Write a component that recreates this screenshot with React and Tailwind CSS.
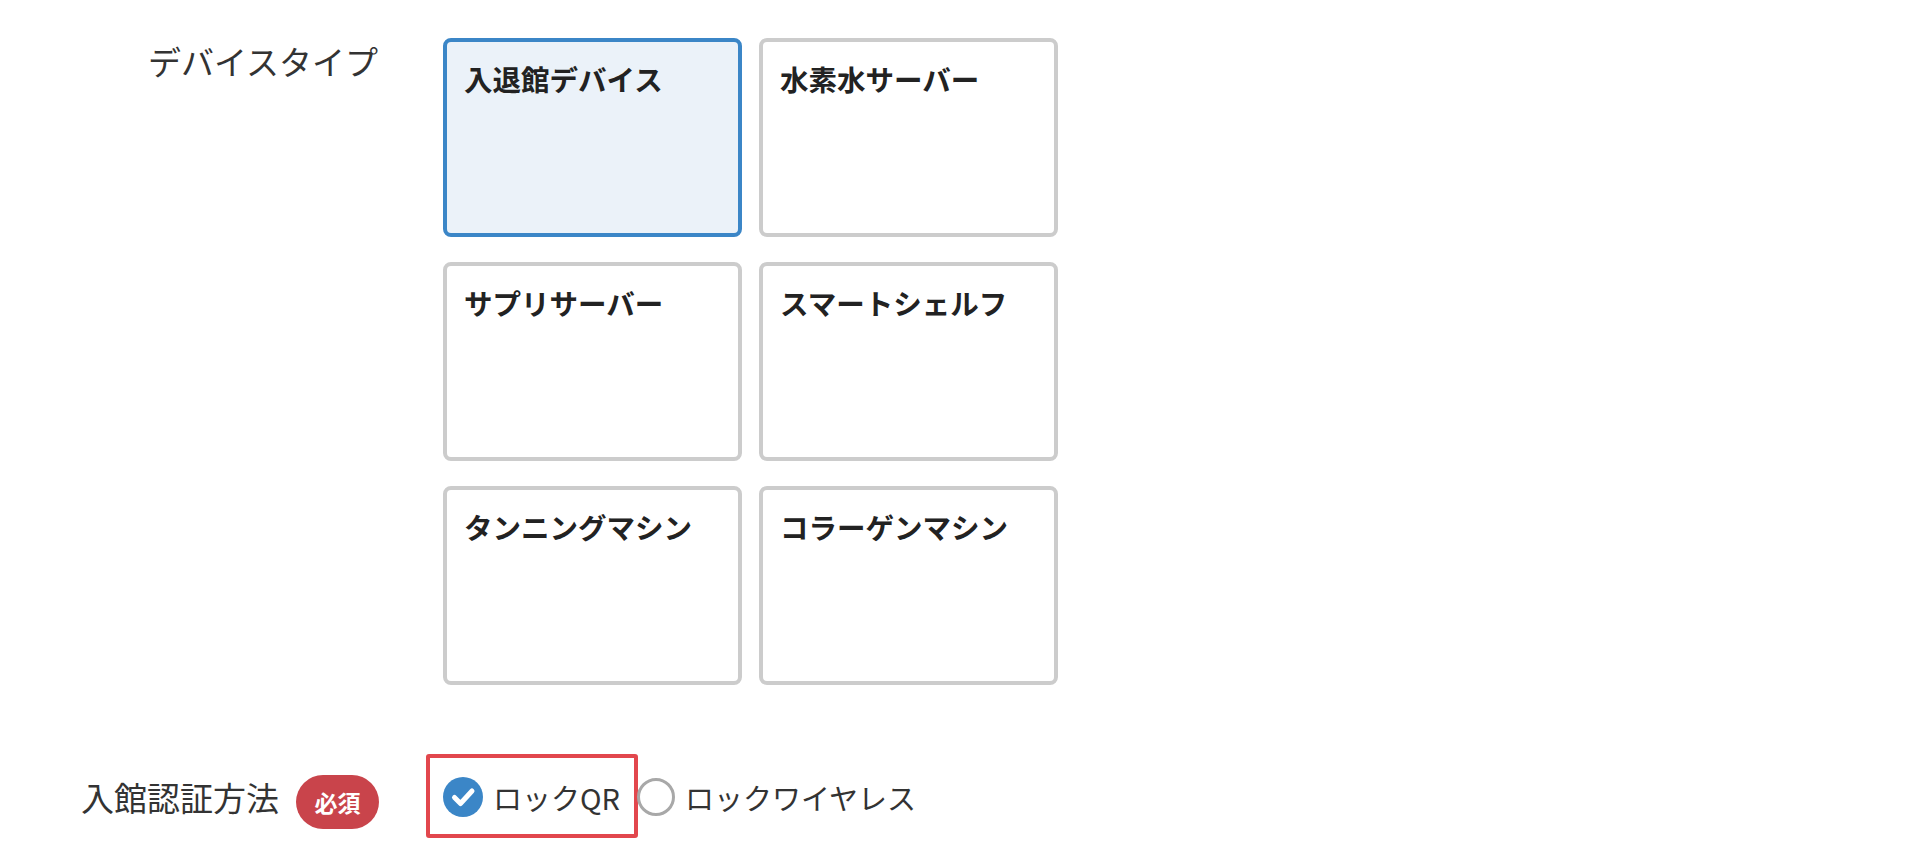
import React, { useState } from 'react';

const DEVICE_TYPES = [
  '入退館デバイス',
  '水素水サーバー',
  'サプリサーバー',
  'スマートシェルフ',
  'タンニングマシン',
  'コラーゲンマシン',
];

const AUTH_METHODS = ['ロックQR', 'ロックワイヤレス'];

const CheckIcon = () => (
  <svg width="40" height="40" viewBox="0 0 40 40" className="shrink-0">
    <circle cx="20" cy="20" r="20" fill="#3b86c7" />
    <path
      d="M11.5 20.5 L17.5 26.5 L29 14"
      fill="none"
      stroke="#ffffff"
      strokeWidth="5"
      strokeLinecap="round"
      strokeLinejoin="round"
    />
  </svg>
);

const App = () => {
  const [deviceType, setDeviceType] = useState(DEVICE_TYPES[0]);
  const [authMethod, setAuthMethod] = useState(AUTH_METHODS[0]);

  return (
    <div
      className="min-h-screen bg-white pt-[38px] text-[#333333]"
      style={{ fontFamily: '"Noto Sans CJK JP", "Noto Sans", sans-serif' }}
    >
      {/* Device type */}
      <div className="flex items-start">
        <div className="w-[378px] shrink-0 text-right text-[33px] leading-[46px]">
          デバイスタイプ
        </div>
        <div className="ml-[65px] grid grid-cols-[299px_299px] gap-x-[17px] gap-y-[25px]">
          {DEVICE_TYPES.map((name) => {
            const selected = name === deviceType;
            return (
              <button
                key={name}
                type="button"
                onClick={() => setDeviceType(name)}
                className={
                  selected
                    ? 'h-[199px] rounded-[8px] border-4 border-[#3b86c7] bg-[#ebf2f9] pl-[17px] pt-[16px] text-left align-top'
                    : 'h-[199px] rounded-[8px] border-4 border-[#cccccc] bg-white pl-[17px] pt-[16px] text-left align-top'
                }
              >
                <div className="h-full text-[28.5px] font-bold leading-[42px] text-[#222222]">
                  {name}
                </div>
              </button>
            );
          })}
        </div>
      </div>

      {/* Auth method */}
      <div className="mt-[79px] flex items-center">
        <div className="flex w-[379px] shrink-0 items-center justify-end">
          <span className="text-[33px] leading-[46px]">入館認証方法</span>
          <span className="ml-[17px] mt-[11px] flex h-[54px] w-[83px] items-center justify-center rounded-full bg-[#c9444b] text-[23px] font-bold text-white">
            必須
          </span>
        </div>
        <div className="ml-[64px] flex items-center">
          {AUTH_METHODS.map((method, i) => {
            const checked = method === authMethod;
            return (
              <label
                key={method}
                onClick={() => setAuthMethod(method)}
                className={
                  i === 0
                    ? 'relative flex cursor-pointer items-center'
                    : 'relative ml-[17px] flex cursor-pointer items-center'
                }
              >
                {checked ? (
                  <CheckIcon />
                ) : (
                  <span className="h-[38px] w-[38px] shrink-0 rounded-full border-[3px] border-[#a8a8a8] bg-white" />
                )}
                <span className="ml-[10px] text-[29px] leading-[40px] text-[#333333]">{method}</span>
                {i === 0 && (
                  <span className="pointer-events-none absolute -bottom-[21px] -left-[17px] -right-[18px] -top-[23px] rounded-[3px] border-[4px] border-[#e2474d]" />
                )}
              </label>
            );
          })}
        </div>
      </div>
    </div>
  );
};

export default App;
